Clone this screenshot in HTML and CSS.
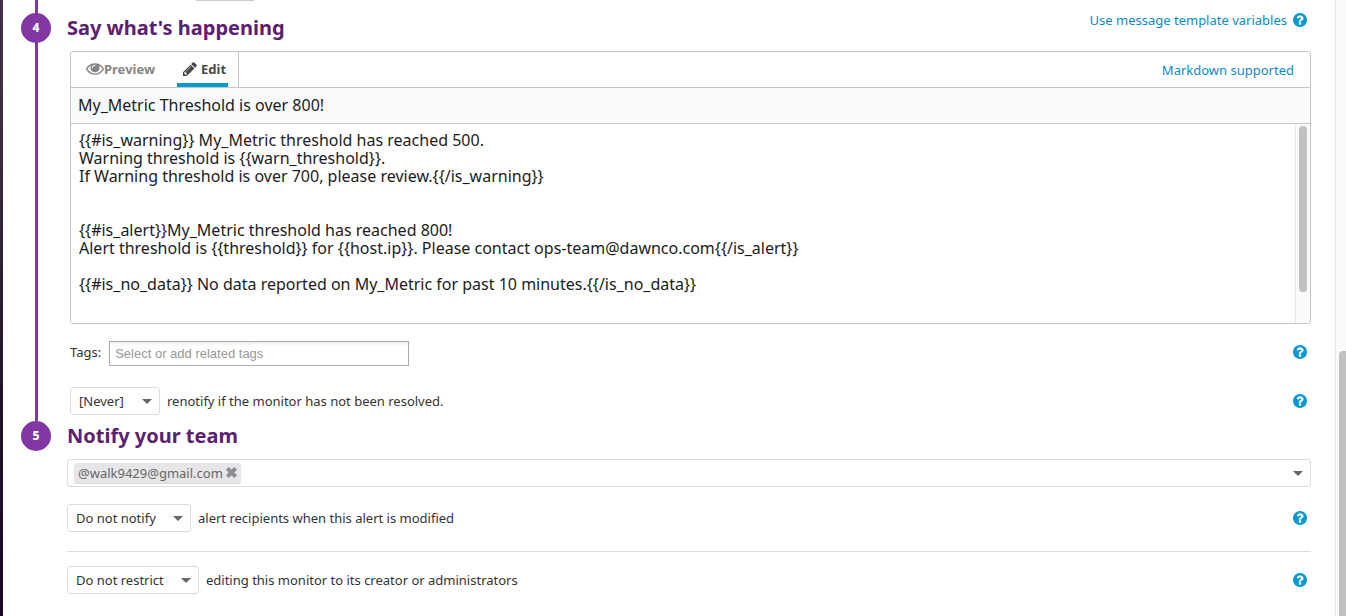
FILE: index.html
```html
<!DOCTYPE html>
<html lang="en">
<head>
<meta charset="utf-8">
<title>Edit monitor</title>
<link rel="stylesheet" href="styles.css">
</head>
<body>
<svg class="sprite" aria-hidden="true">
  <symbol id="help" viewBox="128 128 1536 1536"><path d="M1024 1376v-192q0-14-9-23t-23-9h-192q-14 0-23 9t-9 23v192q0 14 9 23t23 9h192q14 0 23-9t9-23zm256-672q0-88-55.5-163t-138.5-116-170-41q-243 0-371 213-15 24 8 42l132 100q7 6 19 6 16 0 25-12 53-68 86-92 34-24 86-24 48 0 85.5 26t37.5 59q0 38-20 61t-68 45q-63 28-115.5 86.5t-52.5 125.5v36q0 14 9 23t23 9h192q14 0 23-9t9-23q0-19 21.5-49.5t54.5-49.5q32-18 49-28.5t46-35 44.5-48 28-60.5 12.5-81zm384 192q0 209-103 385.5t-279.5 279.5-385.5 103-385.5-103-279.5-279.5-103-385.5 103-385.5 279.5-279.5 385.5-103 385.5 103 279.5 279.5 103 385.5z"/></symbol>
  <symbol id="caret" viewBox="0 0 10 5"><path d="M0 0h10L5 5z"/></symbol>
</svg>
<div class="edge"></div>
<main class="page">
  <div class="lead"><span class="lead-rule"></span></div>
  <section class="step step-joined">
    <div class="rail"><span class="badge">4</span></div>
    <div class="content">
      <header class="step-head">
        <h2>Say what's happening</h2>
        <div class="head-links">
          <a href="#">Use message template variables</a>
          <button class="help" aria-label="Help"><svg><use href="#help"/></svg></button>
        </div>
      </header>
      <div class="inset">
        <div class="editor">
          <div class="toolbar">
            <div class="tabs">
              <button class="tab"><svg class="eye" viewBox="0 384 1792 1152"><path d="M1664 960q-152-236-381-353 61 104 61 225 0 185-131.500 316.500t-316.500 131.500-316.500-131.500-131.500-316.500q0-121 61-225-229 117-381 353 133 205 333.500 326.500t434.500 121.500 434.500-121.500 333.500-326.500zm-720-384q0-20-14-34t-34-14q-125 0-214.500 89.500t-89.500 214.500q0 20 14 34t34 14 34-14 14-34q0-86 61-147t147-61q20 0 34-14t14-34zm848 384q0 34-20 69-140 230-376.500 368.500t-499.500 138.500-499.500-139-376.500-368q-20-35-20-69t20-69q140-229 376.500-368t499.500-139 499.500 139 376.500 368q20 35 20 69z"/><circle cx="896" cy="832" r="130"/></svg>Preview</button>
              <button class="tab tab-active"><svg class="pencil" viewBox="128 128 1536 1536"><path d="M491 1536l91-91-235-235-91 91v107h128v128h107zm523-928q0-22-22-22-10 0-17 7l-542 542q-7 7-7 17 0 22 22 22 10 0 17-7l542-542q7-7 7-17zm-54-192l416 416-832 832h-416v-416zm683 96q0 53-37 90l-166 166-416-416 166-165q36-38 90-38 53 0 91 38l235 234q37 39 37 91z"/></svg>Edit</button>
            </div>
            <a class="markdown" href="#">Markdown supported</a>
          </div>
          <input class="subject" type="text" aria-label="Monitor title" value="My_Metric Threshold is over 800!">
          <div class="message">
            <textarea rows="10" aria-label="Message">{{#is_warning}} My_Metric threshold has reached 500.
Warning threshold is {{warn_threshold}}.
If Warning threshold is over 700, please review.{{/is_warning}}


{{#is_alert}}My_Metric threshold has reached 800!
Alert threshold is {{threshold}} for {{host.ip}}. Please contact ops-team@dawnco.com{{/is_alert}}

{{#is_no_data}} No data reported on My_Metric for past 10 minutes.{{/is_no_data}}
</textarea>
            <div class="scroll"><div class="scroll-thumb"></div></div>
          </div>
        </div>
        <div class="row tags-row">
          <label for="tags">Tags:</label>
          <input class="tags" id="tags" type="text" placeholder="Select or add related tags">
          <button class="help" aria-label="Help"><svg><use href="#help"/></svg></button>
        </div>
        <div class="row renotify-row">
          <span class="pick"><select class="wide" id="renotify"><option>[Never]</option></select><svg><use href="#caret"/></svg></span>
          <label for="renotify">renotify if the monitor has not been resolved.</label>
          <button class="help" aria-label="Help"><svg><use href="#help"/></svg></button>
        </div>
      </div>
    </div>
  </section>
  <section class="step">
    <div class="rail"><span class="badge">5</span></div>
    <div class="content">
      <header class="step-head"><h2>Notify your team</h2></header>
      <div class="recipients">
        <span class="chip">@walk9429@gmail.com<button class="remove" aria-label="Remove"><svg viewBox="0 0 12 12"><path d="M3 0L6 3L9 0L12 3L9 6L12 9L9 12L6 9L3 12L0 9L3 6L0 3z"/></svg></button></span>
        <button class="open" aria-label="Choose recipients"><svg><use href="#caret"/></svg></button>
      </div>
      <div class="row notify-row">
        <span class="pick"><select id="notify"><option>Do not notify</option></select><svg><use href="#caret"/></svg></span>
        <label for="notify">alert recipients when this alert is modified</label>
        <button class="help" aria-label="Help"><svg><use href="#help"/></svg></button>
      </div>
      <hr>
      <div class="row">
        <span class="pick"><select id="restrict"><option>Do not restrict</option></select><svg><use href="#caret"/></svg></span>
        <label for="restrict">editing this monitor to its creator or administrators</label>
        <button class="help" aria-label="Help"><svg><use href="#help"/></svg></button>
      </div>
    </div>
  </section>
</main>
<div class="page-scroll"><div class="page-thumb"></div></div>
</body>
</html>
```
FILE: styles.css
```css
* { box-sizing: border-box; }
body {
  margin: 0;
  min-height: 100vh;
  display: flex;
  background: #fff;
  color: #333;
  font: 13px/18px "Noto Sans", sans-serif;
}
button, input, select, textarea { margin: 0; font: inherit; color: inherit; }
button { padding: 0; border: 0; background: none; cursor: pointer; }
svg { display: block; fill: currentColor; }
a { color: #0b8bcb; text-decoration: none; }
.sprite { position: absolute; width: 0; height: 0; }

.edge { width: 3px; background: linear-gradient(#43304a, #3c2a3f 25%, #25142b 60%, #1b0724); }
.page { flex: 1; min-width: 0; padding: 0 24px 0 18px; }
.lead {
  height: 13px;
  padding-left: 175px;
  background: linear-gradient(#8237a5, #8237a5) 14px 0 / 3px 100% no-repeat;
}
.lead-rule { display: block; width: 58px; height: 1px; background: #ccc; }

.step { display: flex; gap: 16px; }
.rail { width: 30px; flex: none; }
.step-joined .rail { background: linear-gradient(#8237a5, #8237a5) 14px 0 / 3px 100% no-repeat; }
.badge {
  display: block;
  height: 30px;
  border-radius: 50%;
  background: #8237a5;
  color: #fff;
  font-size: 12px;
  font-weight: 800;
  line-height: 30px;
  text-align: center;
}
.content { flex: 1; min-width: 0; }
.step-head { display: flex; justify-content: space-between; align-items: flex-start; margin-bottom: 8px; }
h2 { margin: 0; color: #5c2071; font-size: 20px; line-height: 30px; }
.head-links { display: flex; align-items: center; gap: 6px; line-height: 14px; }
.help { color: #0598d3; margin: 0 4px 0 auto; }
.help svg { width: 14px; height: 14px; }
.inset { padding: 0 0 6px 3px; }

.editor { border: 1px solid #c4c6c8; border-radius: 3px; overflow: hidden; }
.toolbar { display: flex; justify-content: space-between; border-bottom: 1px solid #c4c6c8; }
.tabs { display: flex; gap: 22px; padding: 0 10px 0 15px; border-right: 1px solid #c4c6c8; }
.tab {
  display: flex;
  align-items: center;
  height: 35px;
  border-bottom: 4px solid transparent;
  padding-top: 3px;
  color: #858585;
  font-weight: 700;
}
.tab-active { gap: 4px; padding: 3px 2px 0 6px; border-color: #0598d3; color: #484848; }
.eye { width: 18px; height: 12px; }
.pencil { width: 14px; height: 14px; }
.markdown { padding: 9px 16px 0 0; line-height: 18px; }
.subject {
  display: block;
  width: 100%;
  height: 36px;
  padding: 0 7px 1px;
  border: 0;
  border-bottom: 1px solid #c4c6c8;
  background: #f9fafc;
  color: #1c1c1c;
  font-size: 16px;
}
.message { display: flex; }
textarea {
  display: block;
  flex: 1;
  padding: 7px 8px 12px;
  border: 0;
  resize: none;
  overflow: hidden;
  color: #1c1c1c;
  font-size: 16px;
  line-height: 18px;
}
.scroll { width: 15px; padding: 2px 3px; border-left: 1px solid #e8e8e8; background: #fafafa; }
.scroll-thumb { width: 8px; height: 85%; border-radius: 4px; background: #c1c1c1; }

.row { display: flex; align-items: center; gap: 7px; }
.tags-row { gap: 8px; margin: 17px 0 21px; }
.tags-row label, .tags-row .help { padding-bottom: 4px; }
.tags {
  width: 300px;
  height: 25px;
  padding: 0 5px;
  border: 1px solid #aaa;
  background: linear-gradient(#eee, #fff 4px);
  font-family: "Liberation Sans", Arial, sans-serif;
}
.tags::placeholder { color: #999; }
.pick { position: relative; }
.pick svg { position: absolute; right: 8px; top: 12px; width: 10px; height: 5px; color: #666; pointer-events: none; }
select {
  display: block;
  height: 28px;
  padding: 0 34px 0 8px;
  border: 1px solid #dcdcdc;
  border-radius: 3px;
  background: #fff;
  appearance: none;
}
.wide { width: 90px; }

.recipients {
  display: flex;
  align-items: center;
  justify-content: space-between;
  height: 28px;
  padding: 0 7px 0 6px;
  border: 1px solid #dcdcdc;
  border-radius: 3px;
}
.chip {
  display: flex;
  align-items: center;
  gap: 3px;
  height: 21px;
  padding: 0 4px;
  border-bottom: 1px solid #d8d8da;
  border-radius: 3px;
  background: #e6e6e8;
  color: #666;
}
.remove { color: #8d8a90; }
.remove svg { width: 11px; height: 11px; }
.open svg { width: 10px; height: 5px; color: #666; }
.notify-row { margin-top: 17px; }
hr { margin: 19px 0 14px; border: 0; border-top: 1px solid #dcdcdc; }

.page-scroll { display: flex; flex-direction: column; justify-content: flex-end; width: 11px; padding-left: 3px; border-left: 1px solid #e8e8e8; background: #fafafa; }
.page-thumb { height: 43%; border-radius: 4px 0 0 0; background: #c1c1c1; }
```
